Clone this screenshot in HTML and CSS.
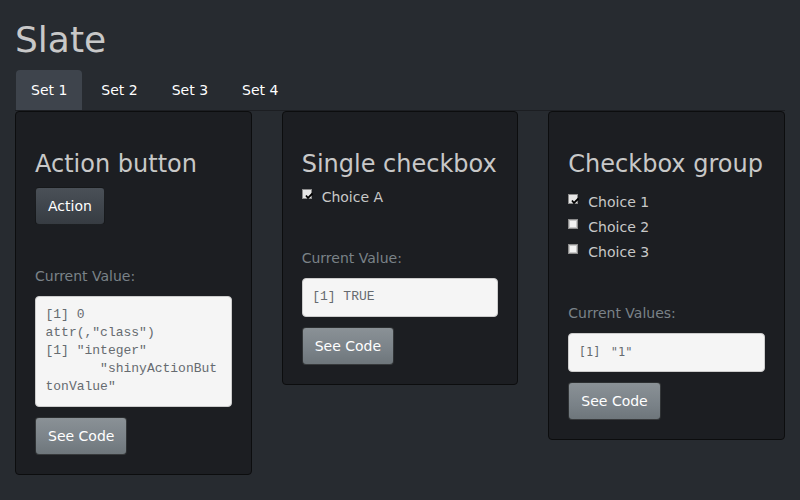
FILE: index.html
```html
<!DOCTYPE html>
<html>
<head>
<meta charset="utf-8">
<link rel="stylesheet" href="styles.css">
</head>
<body>
<div class="container">
  <h1 class="title">Slate</h1>
  <ul class="tabs">
    <li class="tab active">Set 1</li>
    <li class="tab">Set 2</li>
    <li class="tab">Set 3</li>
    <li class="tab">Set 4</li>
  </ul>
  <div class="grid">
    <div class="well">
      <h3 class="heading">Action button</h3>
      <div><span class="btn btn-dark">Action</span></div>
      <p class="current">Current Value:</p>
      <pre class="out">[1] 0
attr(,"class")
[1] "integer"
       "shinyActionBut
tonValue"</pre>
      <span class="btn btn-light">See Code</span>
    </div>
    <div class="well">
      <h3 class="heading">Single checkbox</h3>
      <div class="checks">
        <label class="check"><svg class="box" width="12" height="12" viewBox="0 0 12 12"><rect x="0.5" y="0.5" width="9" height="9" fill="#e6e6e6" stroke="#8c8c8c"/><path d="M4 6.5 L6 9 L10.5 4.5" stroke="#000" stroke-width="1.8" fill="none"/></svg><span>Choice A</span></label>
      </div>
      <p class="current">Current Value:</p>
      <pre class="out">[1] TRUE</pre>
      <span class="btn btn-light">See Code</span>
    </div>
    <div class="well">
      <h3 class="heading">Checkbox group</h3>
      <div class="checks group">
        <label class="check"><svg class="box" width="12" height="12" viewBox="0 0 12 12"><rect x="0.5" y="0.5" width="9" height="9" fill="#e6e6e6" stroke="#8c8c8c"/><path d="M4 6.5 L6 9 L10.5 4.5" stroke="#000" stroke-width="1.8" fill="none"/></svg><span>Choice 1</span></label>
        <label class="check"><svg class="box" width="12" height="12" viewBox="0 0 12 12"><rect x="0.5" y="0.5" width="9" height="9" fill="#f2f2f2" stroke="#8c8c8c"/><rect x="1.5" y="1.5" width="7" height="7" fill="none" stroke="#c8c8c8"/></svg><span>Choice 2</span></label>
        <label class="check"><svg class="box" width="12" height="12" viewBox="0 0 12 12"><rect x="0.5" y="0.5" width="9" height="9" fill="#f2f2f2" stroke="#8c8c8c"/><rect x="1.5" y="1.5" width="7" height="7" fill="none" stroke="#c8c8c8"/></svg><span>Choice 3</span></label>
      </div>
      <p class="current">Current Values:</p>
      <pre class="out out-alt">[1] "1"</pre>
      <span class="btn btn-light">See Code</span>
    </div>
  </div>
</div>
</body>
</html>
```
FILE: styles.css
```css
html, body {
  margin: 0;
  padding: 0;
}
body {
  background: #272b30;
  color: #c8c8c8;
  font-family: "DejaVu Sans", sans-serif;
  font-size: 14px;
  line-height: 20px;
}
.container {
  padding: 0 15px;
}
.title {
  font-size: 36px;
  font-weight: 400;
  line-height: 1.1;
  margin: 20px 0 10px;
  color: #c8c8c8;
}
.tabs {
  list-style: none;
  margin: 0;
  padding: 0 0 0 1px;
  display: flex;
  gap: 4px;
  height: 40px;
  border-bottom: 1px solid #1c1e22;
}
.tab {
  padding: 10px 15px;
  color: #fff;
  border-radius: 4px 4px 0 0;
  line-height: 20px;
}
.tab.active {
  background: #3e444c;
}
.grid {
  display: grid;
  grid-template-columns: repeat(3, 1fr);
  column-gap: 30px;
  align-items: start;
}
.well {
  background: #1c1e22;
  border: 1px solid #0c0d0e;
  border-radius: 4px;
  padding: 19px;
}
.heading {
  font-size: 24px;
  font-weight: 400;
  line-height: 1.1;
  margin: 20px 0 10px;
  color: #c8c8c8;
}
.btn {
  display: inline-block;
  padding: 8px 12px;
  font-size: 14px;
  line-height: 20px;
  border-radius: 4px;
  border: 1px solid rgba(0, 0, 0, 0.6);
  color: #fff;
}
.btn-dark {
  background: linear-gradient(#4a5057, #3e444b 60%, #373c42);
}
.btn-light {
  background: linear-gradient(#8a9196, #7a8288 60%, #6e767b);
}
.current {
  margin: 41px 0 10px;
  color: #7a8288;
}
.out {
  margin: 0 0 10px;
  padding: 9.5px;
  background: #f5f5f5;
  border: 1px solid #cccccc;
  border-radius: 4px;
  font-family: "Liberation Mono", monospace;
  font-size: 13px;
  line-height: 18px;
  color: #666b70;
  white-space: pre;
  overflow: hidden;
}
.out-alt {
  font-family: "DejaVu Sans Mono", monospace;
  font-size: 12px;
  word-spacing: 3px;
  color: #666b70;
}
.checks {
  display: flex;
  flex-direction: column;
  gap: 5px;
}
.checks.group {
  padding-top: 5px;
}
.check {
  display: flex;
  align-items: center;
  height: 20px;
  color: #c8c8c8;
}
.box {
  margin-right: 8px;
  margin-bottom: 3px;
  flex: none;
}
```
